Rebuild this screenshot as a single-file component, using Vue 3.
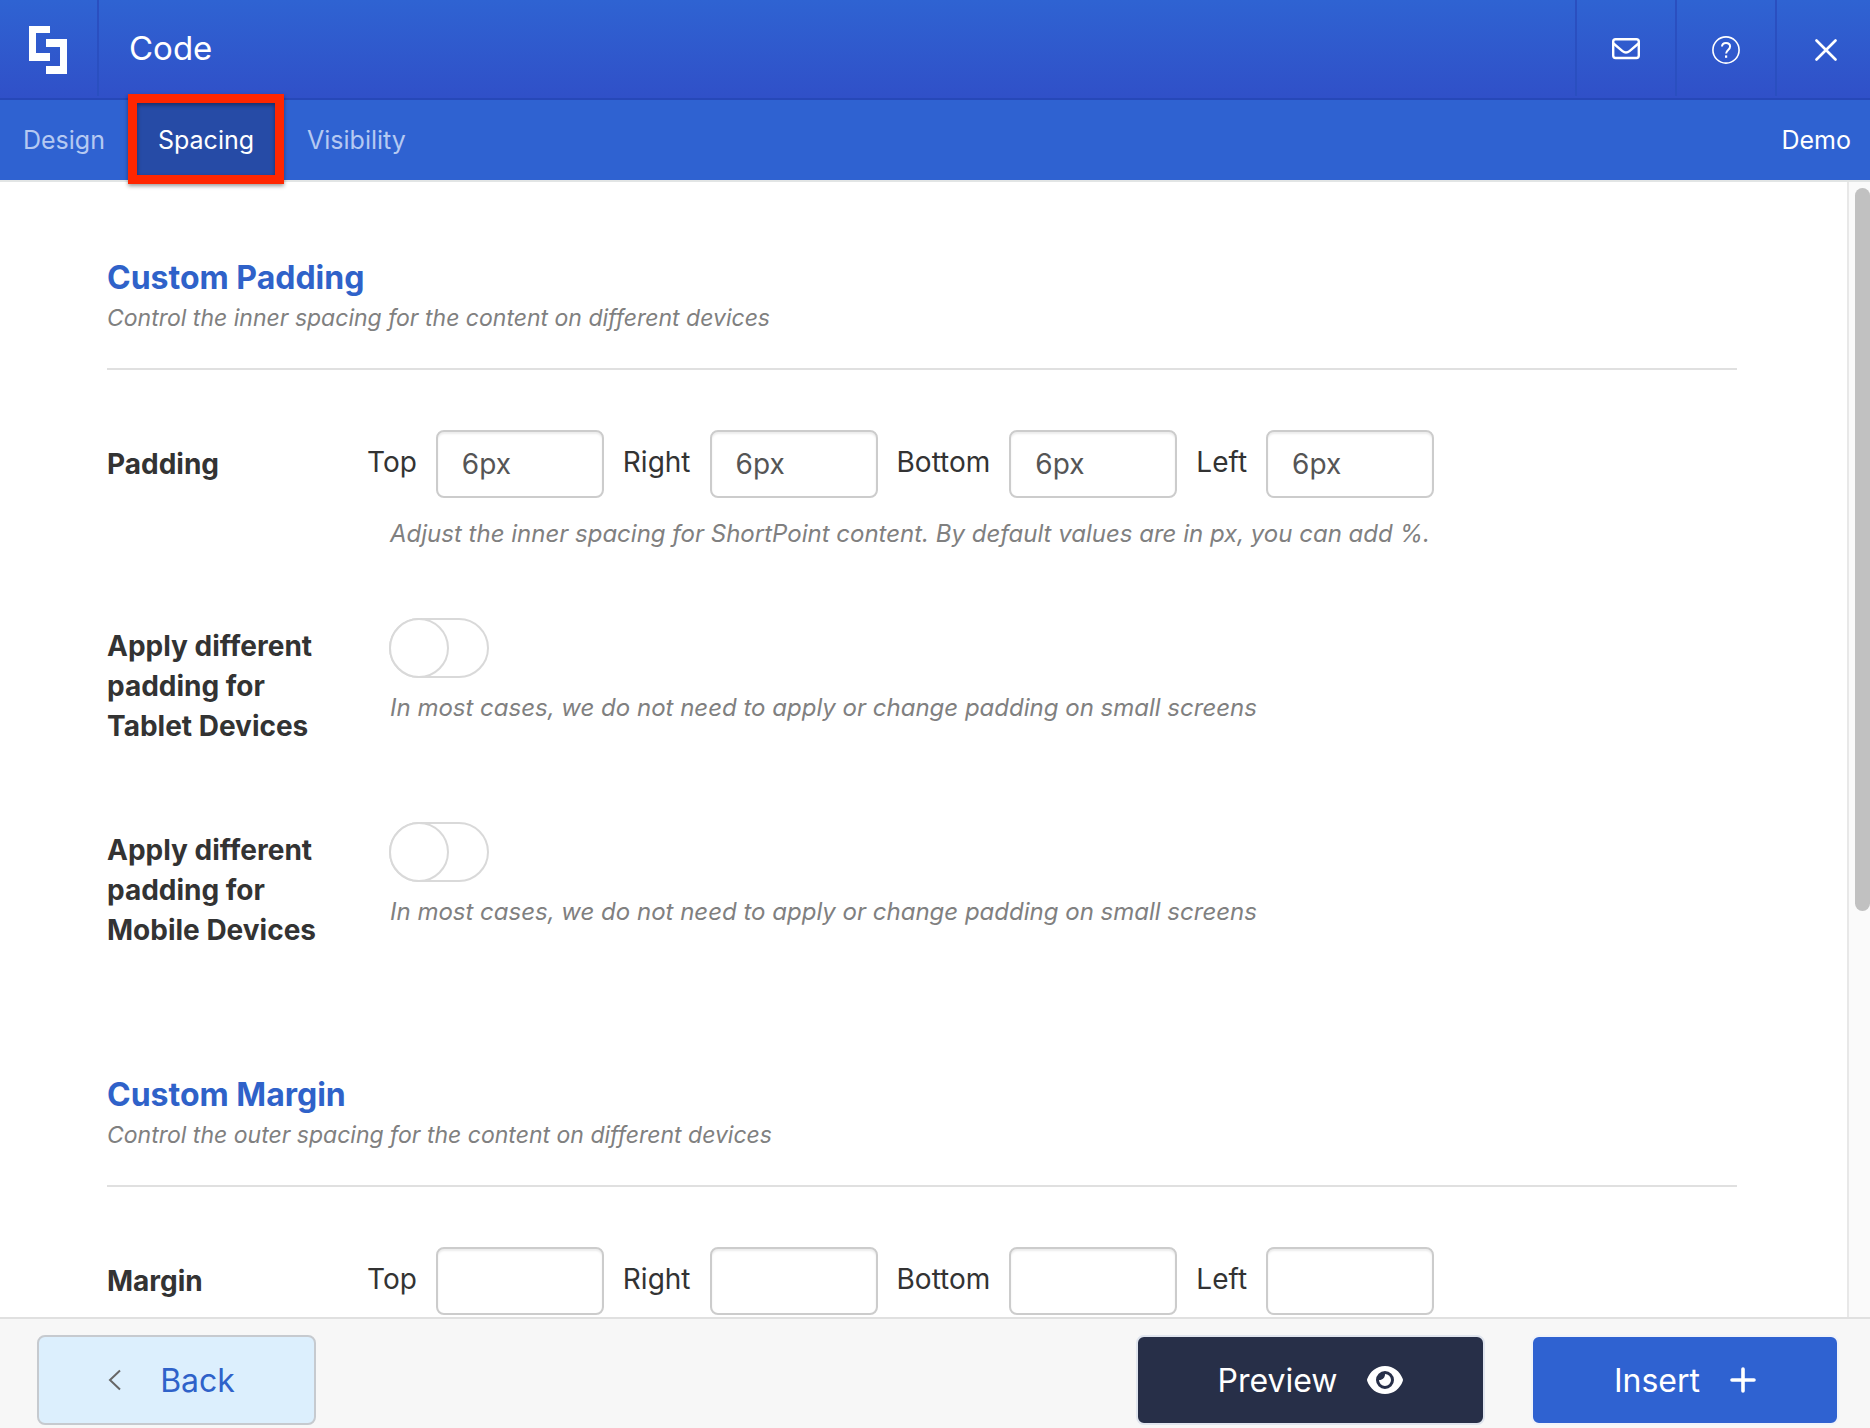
<template>
  <div class="dialog">
    <header class="topbar">
      <div class="brand">
        <svg width="38" height="48" viewBox="0 0 38 48" fill="#fff" aria-hidden="true">
          <path d="M0 0h21v7H7v20h14v8H0z" />
          <path d="M17 13h21v35H17v-8h14V21H17z" />
        </svg>
      </div>
      <h1 class="title">Code</h1>
      <button class="icon-btn" type="button" aria-label="Messages">
        <svg width="28" height="24" viewBox="0 0 28 24" fill="none" stroke="#fff" stroke-width="2.4" stroke-linejoin="round" aria-hidden="true">
          <rect x="1.2" y="1.2" width="25.6" height="18.8" rx="2.4" />
          <path d="M1.5 5.5l9 7.6c2.2 1.8 4.8 1.8 7 0l9-7.6" />
        </svg>
      </button>
      <button class="icon-btn" type="button" aria-label="Help">
        <svg width="28" height="28" viewBox="0 0 28 28" fill="none" stroke="#fff" stroke-width="1.6" aria-hidden="true">
          <circle cx="14" cy="14" r="13.1" />
          <path d="M10 10.6C10 8.2 11.7 6.9 14 6.9s4.1 1.4 4.1 3.6c0 3.3-4 3.5-4 7" stroke-width="2" />
          <path d="M14.1 19.4v2.4" stroke-width="2.2" />
        </svg>
      </button>
      <button class="icon-btn close" type="button" aria-label="Close">
        <svg width="22" height="22" viewBox="0 0 22 22" fill="none" stroke="#fff" stroke-width="2.6" stroke-linecap="round" aria-hidden="true">
          <path d="M1.5 1.5l19 19M20.5 1.5l-19 19" />
        </svg>
      </button>
    </header>

    <nav class="tabs">
      <a
        v-for="tab in tabs"
        :key="tab"
        href="#"
        class="tab"
        :class="{ active: tab === activeTab }"
        @click.prevent="activeTab = tab"
      >{{ tab }}<span v-if="tab === 'Spacing'" class="highlight"></span></a>
      <a href="#" class="tab demo" @click.prevent>Demo</a>
    </nav>

    <div class="body">
      <main class="content">
        <section v-for="section in sections" :key="section.id" class="section">
          <div class="section-head">
            <h2>{{ section.title }}</h2>
            <p>{{ section.description }}</p>
          </div>

          <div class="row sides-row">
            <div class="row-label">{{ section.label }}</div>
            <div class="row-main">
              <div class="sides">
                <template v-for="side in section.sides" :key="side.name">
                  <label :for="`${section.id}-${side.name}`">{{ side.name }}</label>
                  <input :id="`${section.id}-${side.name}`" v-model="side.value" type="text" />
                </template>
              </div>
              <p v-if="section.hint" class="hint">{{ section.hint }}</p>
            </div>
          </div>

          <div v-for="option in section.options" :key="option.id" class="row option-row">
            <label class="row-label" :for="option.id">{{ option.label }}</label>
            <div class="row-main">
              <input :id="option.id" v-model="option.enabled" class="switch" type="checkbox" />
              <p class="hint">{{ option.hint }}</p>
            </div>
          </div>
        </section>
      </main>
      <div class="scroll-track"><div class="scroll-thumb"></div></div>
    </div>

    <footer class="actions">
      <button class="btn back" type="button">
        <svg width="14" height="22" viewBox="0 0 14 22" fill="none" stroke="#666" stroke-width="2" aria-hidden="true">
          <path d="M12 1.5L2 11l10 9.5" />
        </svg>
        Back
      </button>
      <button class="btn preview" type="button">
        Preview
        <svg width="36" height="28" viewBox="0 0 36 28" aria-hidden="true">
          <path fill="#fff" fill-rule="evenodd" d="M18 0C9.5 0 3 5.5 0.3 12.8a3 3 0 0 0 0 2.4C3 22.5 9.5 28 18 28s15-5.5 17.7-12.8a3 3 0 0 0 0-2.4C33 5.5 26.5 0 18 0zM18 5a9 9 0 1 1 0 18a9 9 0 0 1 0-18z" />
          <path fill="#fff" d="M18 8c.2 3.5-2.5 6.2-6 6a6 6 0 1 0 6-6z" />
        </svg>
      </button>
      <button class="btn insert" type="button">
        Insert
        <svg width="26" height="26" viewBox="0 0 26 26" fill="none" stroke="#fff" stroke-width="3.6" stroke-linecap="round" aria-hidden="true">
          <path d="M13 2v22M2 13h22" />
        </svg>
      </button>
    </footer>
  </div>
</template>

<script setup>
import { ref } from 'vue'

const tabs = ['Design', 'Spacing', 'Visibility']
const activeTab = ref('Spacing')

function makeSides(value) {
  return ['Top', 'Right', 'Bottom', 'Left'].map((name) => ({ name, value }))
}

const smallScreenHint = 'In most cases, we do not need to apply or change padding on small screens'

const sections = ref([
  {
    id: 'padding',
    title: 'Custom Padding',
    description: 'Control the inner spacing for the content on different devices',
    label: 'Padding',
    sides: makeSides('6px'),
    hint: 'Adjust the inner spacing for ShortPoint content. By default values are in px, you can add %.',
    options: [
      { id: 'tablet', label: 'Apply different padding for Tablet Devices', hint: smallScreenHint, enabled: false },
      { id: 'mobile', label: 'Apply different padding for Mobile Devices', hint: smallScreenHint, enabled: false }
    ]
  },
  {
    id: 'margin',
    title: 'Custom Margin',
    description: 'Control the outer spacing for the content on different devices',
    label: 'Margin',
    sides: makeSides(''),
    options: []
  }
])
</script>

<style>
body {
  background: #fff;
}
</style>

<style scoped>
.dialog {
  display: flex;
  flex-direction: column;
  height: 100vh;
  font-family: Inter, sans-serif;
  color: #333;
}

.dialog *,
.dialog *::before {
  box-sizing: border-box;
}

.topbar {
  display: flex;
  flex: none;
  height: 100px;
  padding-bottom: 2px;
  border-bottom: 2px solid #2648b8;
  background: linear-gradient(#2f63d2, #3050c8);
  color: #fff;
}

.brand {
  display: flex;
  align-items: center;
  width: 99px;
  padding: 4px 0 0 29px;
  border-right: 2px solid #2a4fc0;
}

.title {
  flex: 1;
  margin: 0;
  padding-left: 30px;
  font-size: 33px;
  font-weight: 400;
  line-height: 96px;
}

.icon-btn {
  display: flex;
  align-items: center;
  justify-content: center;
  width: 100px;
  padding: 4px 0 0;
  border: 0;
  border-left: 2px solid #2a4fc0;
  background: none;
}

.icon-btn.close {
  width: 95px;
  padding-left: 4px;
}

.tabs {
  display: flex;
  flex: none;
  gap: 7px;
  height: 80px;
  background: #2f62d1;
}

.tab {
  position: relative;
  padding: 0 23px;
  color: #b5c9f2;
  font-size: 25px;
  line-height: 80px;
  text-decoration: none;
}

.tab.active {
  background: #264ba6;
  color: #fff;
}

.tab.demo {
  margin-left: auto;
  padding: 0 19px;
  color: #fff;
}

.highlight {
  position: absolute;
  z-index: 1;
  inset: -6px -7px -4px;
  border: 9px solid #ff2600;
  box-shadow: 0 2px 4px rgba(0, 0, 0, 0.4), inset 0 2px 4px rgba(0, 0, 0, 0.4);
  pointer-events: none;
}

.body {
  display: flex;
  flex: 1;
  min-height: 0;
  border-top: 2px solid #e2e5e5;
}

.content {
  flex: 1;
  overflow: auto;
  padding: 70px 110px 0 107px;
  scrollbar-width: none;
}

.section {
  margin-bottom: 111px;
}

.section-head {
  border-bottom: 2px solid #e0e0e0;
  padding-bottom: 36px;
}

.section-head h2 {
  margin: 0;
  color: #2f62c9;
  font-size: 32px;
  font-weight: 700;
  line-height: 52px;
}

.section-head p {
  margin: 0;
  color: #808080;
  font-size: 23px;
  font-style: italic;
  line-height: 28px;
}

.row {
  display: flex;
}

.row-label {
  flex: none;
  width: 260px;
  padding-right: 40px;
  font-size: 28px;
  font-weight: 700;
  line-height: 40px;
}

.row-main {
  flex: 1;
}

.sides-row {
  margin-top: 60px;
}

.sides-row .row-label {
  padding-top: 14px;
}

.sides {
  display: flex;
  align-items: center;
  gap: 19px;
}

.sides label {
  padding-bottom: 4px;
  font-size: 28px;
  line-height: 40px;
}

.sides input {
  width: 168px;
  height: 68px;
  padding: 0 24px;
  border: 2px solid #ccc;
  border-radius: 8px;
  box-shadow: inset 0 2px 2px rgba(0, 0, 0, 0.08);
  color: #555;
  font: 28px Inter, sans-serif;
}

.hint {
  margin: 0 0 0 23px;
  color: #808080;
  font-size: 24px;
  font-style: italic;
  line-height: 32px;
}

.sides + .hint {
  margin-top: 20px;
}

.option-row {
  margin-top: 68px;
  padding-bottom: 8px;
}

.option-row .row-label {
  padding-top: 8px;
}

.switch {
  display: block;
  width: 100px;
  height: 60px;
  margin: 0 0 14px 22px;
  border: 2px solid #d9d9d9;
  border-radius: 30px;
  appearance: none;
  background: #fff;
}

.switch::before {
  display: block;
  width: 60px;
  height: 60px;
  margin: -2px;
  border: 2px solid #d9d9d9;
  border-radius: 50%;
  background: #fff;
  content: '';
}

.switch:checked {
  background: #2f62d1;
}

.switch:checked::before {
  margin-left: 38px;
}

.scroll-track {
  flex: none;
  width: 23px;
  padding: 6px 0 0 6px;
  border-left: 2px solid #e8e8e8;
  background: #fafafa;
}

.scroll-thumb {
  height: 64%;
  border-radius: 8px;
  background: #c1c1c1;
}

.actions {
  display: flex;
  flex: none;
  padding: 16px 31px 3px 37px;
  border-top: 2px solid #e0e0e0;
  background: #f7f7f7;
}

.btn {
  display: flex;
  align-items: center;
  justify-content: center;
  gap: 30px;
  height: 90px;
  padding: 0;
  border: 2px solid #e0e5ee;
  border-radius: 8px;
  color: #fff;
  font: 32px Inter, sans-serif;
}

.back {
  gap: 38px;
  width: 279px;
  margin-right: auto;
  padding-right: 10px;
  border-color: #c6cacf;
  background: #dceffd;
  color: #2f62c9;
}

.preview {
  width: 349px;
  margin-right: 46px;
  background: #272f48;
}

.insert {
  width: 308px;
  border-color: #f0f3fa;
  background: #2f62d1;
}
</style>
